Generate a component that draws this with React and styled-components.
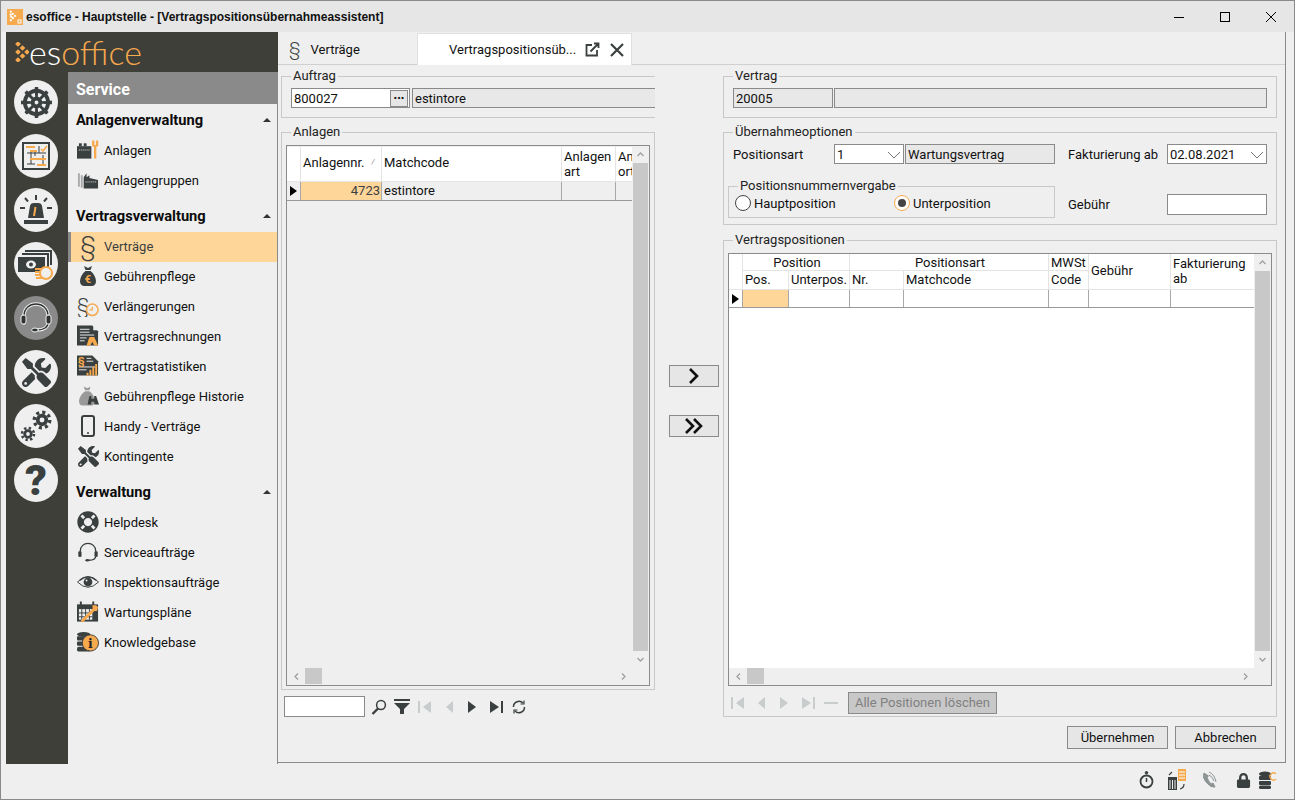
import React from 'react'
import styled, { createGlobalStyle } from 'styled-components'
import { FaDharmachakra, FaTools, FaLifeRing, FaLock } from 'react-icons/fa'

const DARK = '#3a3f3f'
const ORANGE = '#f7a94e'

const Global = createGlobalStyle`
  html, body { margin:0; padding:0; background:#efefef; overflow:hidden; }
  * { box-sizing:border-box; }
  body { font-family:Roboto, "Liberation Sans", sans-serif; font-size:13px; color:#111; }
`

const Window = styled.div`
  width:1295px;
  height:800px;
  border:1px solid #8a8a8a;
  background:#efefef;
  display:flex;
  flex-direction:column;
`
const TitleBar = styled.div`
  height:31px;
  background:#e6e6e6;
  display:flex;
  align-items:center;
  padding-left:6px;
  flex:none;
`
const TitleText = styled.div`
  font-family:"Liberation Sans", sans-serif;
  font-weight:700;
  font-size:12px;
  margin-left:3px;
  flex:1;
`
const WinButton = styled.div`
  width:46px;
  height:31px;
  display:flex;
  align-items:center;
  justify-content:center;
`
const Shell = styled.div`
  height:732px;
  flex:none;
  display:flex;
  padding:0 8px 0 5px;
`
const Side = styled.div`
  width:272px;
  height:732px;
  flex:none;
  background:#3f3f39;
  display:flex;
  flex-direction:column;
`
const LogoBar = styled.div`
  height:40px;
  display:flex;
  align-items:center;
  padding-left:9px;
  flex:none;
`
const LogoText = styled.div`
  font-family:Lato, "Open Sans", sans-serif;
  font-weight:300;
  font-size:34px;
  line-height:40px;
  color:#fff;
  span { color:${ORANGE}; }
`
const SideBody = styled.div`
  flex:1;
  display:flex;
  min-height:0;
`
const Rail = styled.div`
  width:62px;
  flex:none;
  padding:8px 0 0 8px;
  display:flex;
  flex-direction:column;
  gap:10px;
`
const RailButton = styled.div`
  width:44px;
  height:44px;
  border-radius:50%;
  background:${p => (p.$active ? '#8a8a8a' : '#efefef')};
  color:${DARK};
  display:flex;
  align-items:center;
  justify-content:center;
`
const Question = styled.span`
  font-family:Roboto, sans-serif;
  font-weight:900;
  font-size:43px;
  line-height:44px;
`
const Menu = styled.div`
  flex:1;
  background:#efefef;
  border-right:1px solid #8a8a8a;
`
const MenuHead = styled.div`
  height:32px;
  background:#8a8a8a;
  color:#fff;
  font-weight:700;
  font-size:16px;
  line-height:36px;
  padding-left:8px;
`
const Section = styled.div`
  margin-bottom:4px;
`
const SectionHead = styled.div`
  height:32px;
  display:flex;
  align-items:center;
  justify-content:space-between;
  padding:0 6px 0 8px;
  font-weight:700;
  font-size:14.67px;
  color:#0c0c0c;
  &::after {
    content:'';
    border:4px solid transparent;
    border-top:0;
    border-bottom:4px solid #333;
  }
`
const Item = styled.div`
  height:30px;
  display:flex;
  align-items:center;
  gap:5px;
  padding:0 0 2px 6px;
  border-left:3px solid ${p => (p.$active ? '#8a8a8a' : 'transparent')};
  background:${p => (p.$active ? '#ffd699' : 'transparent')};
  color:${p => (p.$active ? '#3a3f3f' : '#111')};
`
const ItemIcon = styled.div`
  width:22px;
  height:22px;
  flex:none;
  color:${DARK};
  display:flex;
  align-items:center;
  justify-content:center;
`
const Paragraph = styled.span`
  font-size:${p => p.$size || 26}px;
  font-weight:300;
  line-height:22px;
  color:${DARK};
`
const Panel = styled.div`
  flex:1;
  height:731px;
  border-right:1px solid #8a8a8a;
  border-bottom:1px solid #8a8a8a;
  display:flex;
  flex-direction:column;
  min-width:0;
`
const TabBar = styled.div`
  height:33px;
  flex:none;
  display:flex;
  border-bottom:1px solid #d0d0d0;
  padding-top:1px;
`
const Tab = styled.div`
  width:${p => p.$w}px;
  height:32px;
  display:flex;
  align-items:center;
  background:${p => (p.$active ? '#fff' : 'transparent')};
  ${p => p.$active && 'border:1px solid #e0e0e0; border-bottom:0;'}
  padding-left:${p => (p.$active ? 31 : 11)}px;
`
const TabIcon = styled.div`
  margin-left:${p => p.$ml}px;
  display:flex;
`
const Content = styled.div`
  flex:1;
  display:flex;
  padding:3px 0 0 3px;
  min-height:0;
`
const Column = styled.div`
  width:${p => p.$w}px;
  flex:none;
  display:flex;
  flex-direction:column;
`
const Box = styled.fieldset`
  margin:${p => p.$mt || 0}px 0 0;
  padding:${p => p.$pad || '4px 9px 0'};
  min-width:0;
  height:${p => p.$h}px;
  border:1px solid #c8c8c8;
  ${p => p.$open && 'border-right:0;'}
  display:flex;
  ${p => p.$col && 'flex-direction:column;'}
  flex:none;
  legend {
    padding:0 2px;
    margin-left:${p => p.$lm || 0}px;
    line-height:16px;
    font-size:13px;
    color:#222;
  }
`
const Row = styled.div`
  display:flex;
  align-items:center;
  width:100%;
  height:${p => p.$h || 20}px;
  margin-top:${p => p.$mt || 0}px;
  flex:none;
`
const Field = styled.div`
  height:${p => p.$h || 20}px;
  width:${p => (p.$w ? p.$w + 'px' : 'auto')};
  ${p => !p.$w && 'flex:1;'}
  margin-left:${p => p.$ml || 0}px;
  border:1px solid #8a8a8a;
  ${p => p.$open && 'border-right:0;'}
  background:${p => (p.$white ? '#fff' : '#e8e8e8')};
  padding:1px 2px 0;
  line-height:17px;
  display:flex;
  align-items:center;
  justify-content:space-between;
  flex-shrink:0;
`
const DotsButton = styled.div`
  width:18px;
  height:17px;
  margin:-1px -1px 0 0;
  border:1px solid #8a8a8a;
  background:#e6e6e6;
  font-weight:900;
  font-size:12px;
  line-height:9px;
  text-align:center;
`
const Label = styled.div`
  width:${p => p.$w}px;
  flex:none;
  padding-left:${p => p.$pl || 0}px;
`
const Frame = styled.div`
  flex:none;
  border:1px solid #8a8a8a;
  display:flex;
  flex-direction:column;
  height:${p => p.$h}px;
`
const FrameBody = styled.div`
  flex:1;
  display:flex;
  min-height:0;
`
const GridMain = styled.div`
  flex:1;
  min-width:0;
  overflow:hidden;
  background:${p => (p.$white ? '#fff' : '#efefef')};
`
const HeadGrid = styled.div`
  display:grid;
  grid-template-columns:${p => p.$cols};
  grid-template-rows:${p => p.$rows};
  gap:1px;
  background:#e4e4e4;
  border-bottom:1px solid #e4e4e4;
  margin-top:${p => p.$mt || 0}px;
`
const HeadCell = styled.div`
  background:#fff;
  overflow:hidden;
  white-space:nowrap;
  padding:0 0 ${p => p.$lift || 0}px 2px;
  line-height:15px;
  display:flex;
  align-items:center;
  ${p => p.$span && `grid-column:span ${p.$span};`}
  ${p => p.$tall && 'grid-row:span 2;'}
  ${p => p.$center && 'justify-content:center;'}
`
const StackedHead = styled.div`
  line-height:15px;
`
const SortMark = styled.span`
  margin:0 6px 0 auto;
  font-size:9px;
  color:#777;
`
const DataGrid = styled.div`
  display:grid;
  grid-template-columns:${p => p.$cols};
  grid-auto-rows:${p => p.$rowH}px;
  gap:1px;
  background:#a8a8a8;
  border-bottom:1px solid #9a9a9a;
`
const DataCell = styled.div`
  background:${p => (p.$sel ? '#ffd699' : p.$white ? '#fff' : '#efefef')};
  text-align:${p => (p.$right ? 'right' : 'left')};
  padding:0 1px 0 2px;
  line-height:18px;
  color:${p => (p.$sel ? '#3a3f3f' : '#111')};
`
const RowMark = styled.div`
  background:${p => (p.$white ? '#fff' : '#efefef')};
  display:flex;
  align-items:center;
  padding-left:3px;
  &::before {
    content:'';
    border:5px solid transparent;
    border-left:7px solid #000;
    border-right:0;
  }
`
const VBar = styled.div`
  width:17px;
  flex:none;
  display:flex;
  flex-direction:column;
  background:#efefef;
`
const BarEnd = styled.div`
  height:17px;
  flex:none;
  display:flex;
  align-items:center;
  justify-content:center;
`
const VThumb = styled.div`
  flex:1;
  background:#c8c8c8;
  margin:0 1px;
`
const HBar = styled.div`
  height:17px;
  flex:none;
  display:flex;
  align-items:center;
  background:#efefef;
  padding:0 ${p => p.$pr}px 1px 0;
`
const HArrow = styled.div`
  width:18px;
  display:flex;
  justify-content:center;
`
const HThumb = styled.div`
  width:17px;
  height:16px;
  background:#c8c8c8;
`
const Spacer = styled.div`
  flex:1;
`
const Toolbar = styled.div`
  display:flex;
  align-items:center;
  flex:none;
  margin:${p => p.$m};
`
const Slot = styled.div`
  width:23.4px;
  display:flex;
  justify-content:center;
  align-items:center;
`
const SearchBox = styled(Field)`
  margin-right:2px;
`
const Disabled = styled.div`
  width:149px;
  height:22px;
  margin-left:5px;
  border:1px solid #8a8a8a;
  background:#c8c8c8;
  color:#808080;
  text-align:center;
  line-height:20px;
`
const Middle = styled.div`
  width:68px;
  flex:none;
  padding:297px 0 0 14px;
  display:flex;
  flex-direction:column;
  gap:28px;
`
const MoveButton = styled.div`
  width:50px;
  height:22px;
  border:1px solid #8a8a8a;
  background:#e6e6e6;
  display:flex;
  align-items:center;
  justify-content:center;
`
const OptionsGrid = styled.div`
  flex:1;
  display:grid;
  grid-template-columns:327px 1fr;
  column-gap:13px;
`
const OptionsSide = styled.div`
  display:flex;
  flex-direction:column;
`
const Radios = styled.div`
  flex:1;
  display:flex;
  align-items:center;
  height:18px;
`
const Radio = styled.div`
  width:${p => p.$w}px;
  display:flex;
  align-items:center;
  gap:3px;
`
const RadioDot = styled.div`
  width:16px;
  height:16px;
  border-radius:50%;
  background:#fff;
  border:1px solid ${p => (p.$on ? ORANGE : '#444')};
  display:flex;
  align-items:center;
  justify-content:center;
  &::after {
    content:'';
    width:8px;
    height:8px;
    border-radius:50%;
    background:${p => (p.$on ? '#444' : 'transparent')};
  }
`
const Actions = styled.div`
  display:flex;
  justify-content:flex-end;
  gap:7px;
  margin:9px 1px 0 0;
`
const ActionButton = styled.div`
  width:101px;
  height:23px;
  border:1px solid #8a8a8a;
  background:#e6e6e6;
  text-align:center;
  line-height:21px;
  color:#111;
`
const StatusBar = styled.div`
  flex:1;
  display:flex;
  align-items:center;
  justify-content:flex-end;
  padding:0 17px 3px 0;
`
const StatusIcon = styled.div`
  display:flex;
  margin-left:${p => p.$ml || 0}px;
`

const Tiny = ({ d }) => (
  <svg width="9" height="9" viewBox="0 0 9 9"><path d={d} fill="none" stroke="#a0a0a0" strokeWidth="1.3" /></svg>
)
const UP = 'M1.5 6 L4.5 3 L7.5 6'
const DOWN = 'M1.5 3 L4.5 6 L7.5 3'
const LEFT = 'M6 1.5 L3 4.5 L6 7.5'
const RIGHT = 'M3 1.5 L6 4.5 L3 7.5'

const Chevron = () => (
  <svg width="14" height="8" viewBox="0 0 14 8"><path d="M1 1 L7 7 L13 1" fill="none" stroke="#777" /></svg>
)

const TitleLogo = () => (
  <svg width="16" height="16" viewBox="0 0 16 16">
    <rect width="16" height="16" fill={ORANGE} />
    <path d="M3 2 L8 7 L3 12 M3 5 L5 7 L3 9" fill="none" stroke="#fff" strokeWidth="2" strokeDasharray="2 1" />
    <rect x="11" y="11" width="3" height="3" fill="none" stroke="#fff" />
  </svg>
)
const LogoMark = () => (
  <svg width="14" height="20" viewBox="0 0 14 20" fill={ORANGE}>
    {[[1, 2], [1, 10], [1, 18], [5.5, 6], [5.5, 14], [10, 10]].map(([x, y], i) => (
      <rect key={i} x={x} y={y - 2} width="4" height="4" transform={`rotate(45 ${x + 2} ${y})`} />
    ))}
  </svg>
)
const BoardIcon = () => (
  <svg width="28" height="28" viewBox="0 0 28 28">
    <rect x="1" y="1" width="26" height="26" fill="none" stroke={DARK} strokeWidth="2" />
    <path d="M9 8 V22 M13 8 V14 M17 4 V11 M21 13 V22 M5 11 H24 M5 22 H13" stroke={DARK} fill="none" />
    <path d="M4 5 H13 M8 9 H15 M8 17 H24 M15 23 H24" stroke={ORANGE} strokeWidth="2" fill="none" />
    <path d="M19 7 L21 9 L25 4" stroke={ORANGE} strokeWidth="1.6" fill="none" />
  </svg>
)
const SirenIcon = () => (
  <svg width="34" height="34" viewBox="0 0 34 34">
    <rect x="5" y="27" width="24" height="4" fill={DARK} />
    <path d="M9 25 L11 13 Q11.5 10 15 10 H19 Q22.5 10 23 13 L25 25 Z" fill={DARK} />
    <path d="M15 23 L16.5 14" stroke={ORANGE} strokeWidth="2" />
    <path d="M17 2 V7 M6 5 L9 8.5 M28 5 L25 8.5 M1 15 H6 M28 15 H33" stroke={DARK} strokeWidth="2" />
  </svg>
)
const MoneyIcon = () => (
  <svg width="36" height="34" viewBox="0 0 36 34">
    <path d="M7 4 H33 V18 M4 7 H30 V20" fill="none" stroke={DARK} strokeWidth="2" />
    <rect x="0" y="10" width="27" height="15" fill={DARK} />
    <ellipse cx="13" cy="17.5" rx="5" ry="4" fill="#efefef" />
    <circle cx="13" cy="17.5" r="2" fill={DARK} />
    <path d="M17 22 H26 M17 25 H26 M17 28 H26 M18 31 H27" stroke={ORANGE} strokeWidth="2" />
    <circle cx="28" cy="26" r="6" fill="#efefef" stroke={ORANGE} strokeWidth="2" />
  </svg>
)
const HeadsetIcon = ({ size = 34, color = DARK }) => (
  <svg width={size} height={size} viewBox="0 0 34 34">
    <path d="M5 22 V15 C5 -1 29 -1 29 15 V22 C29 26 25 29 18 29" fill="none" stroke={color} strokeWidth="2" />
    <rect x="2" y="15" width="5" height="9" rx="2" fill={color} />
    <rect x="27" y="15" width="5" height="9" rx="2" fill={color} />
    <ellipse cx="16" cy="29" rx="3" ry="2" fill={color} />
  </svg>
)
const RailHeadset = () => (
  <svg width="36" height="36" viewBox="0 0 36 36" fill="none" strokeLinecap="round">
    <path d="M6 23 V16 C6 0 30 0 30 16 V23 C30 27 26 30 19 30" stroke="#efefef" strokeWidth="3.4" />
    <path d="M6 23 V16 C6 0 30 0 30 16 V23 C30 27 26 30 19 30" stroke="#2f3333" strokeWidth="1.4" />
    <rect x="3" y="15" width="5" height="9" rx="2" fill="#2f3333" stroke="#efefef" />
    <rect x="28" y="15" width="5" height="9" rx="2" fill="#2f3333" stroke="#efefef" />
    <ellipse cx="17" cy="30" rx="3.4" ry="2" fill="#2f3333" stroke="#efefef" />
  </svg>
)
const Gear = ({ x, y, r }) => {
  const teeth = 2 * Math.PI * (r * 1.3) / 16
  return (
    <g fill="none" stroke={DARK}>
      <circle cx={x} cy={y} r={r * 0.72} strokeWidth={r * 0.62} />
      <circle cx={x} cy={y} r={r * 1.3} strokeWidth={r * 0.55} strokeDasharray={`${teeth} ${teeth}`} />
    </g>
  )
}
const GearsIcon = () => (
  <svg width="34" height="34" viewBox="0 0 34 34">
    <Gear x={23} y={11} r={6} />
    <Gear x={9} y={25} r={4.6} />
  </svg>
)
const MachineIcon = () => (
  <svg width="23" height="22" viewBox="0 0 23 22">
    <rect x="0" y="7" width="15" height="13" fill={DARK} />
    <rect x="2" y="4" width="3" height="3" fill={DARK} />
    <rect x="7" y="4" width="3" height="3" fill={DARK} />
    <path d="M2 11 H13" stroke="#efefef" strokeDasharray="1 1" />
    <path d="M17 1 V6 Q19 8 21 6 V1 M19 8 V20" fill="none" stroke={ORANGE} strokeWidth="2.4" />
  </svg>
)
const FactoryGroupIcon = () => (
  <svg width="23" height="22" viewBox="0 0 23 22">
    <path d="M1 4 H3 V18 H1 Z M4 6 H6 V19 H4 Z" fill="#aaa" />
    <path d="M7 8 L10 4 V8 L13 6 V9 L22 11 V20 H7 Z" fill={DARK} />
    <path d="M9 13 H20" stroke="#efefef" strokeDasharray="1 1" />
  </svg>
)
const BagIcon = ({ color = DARK, euro = ORANGE }) => (
  <svg width="20" height="22" viewBox="0 0 20 22">
    <path d="M6 1 L10 3 L14 1 L12.5 5 H7.5 Z" fill={color} />
    <path d="M7.5 6 H12.5 C19 11 20 21 14 21 H6 C0 21 1 11 7.5 6 Z" fill={color} />
    <text x="10" y="18" textAnchor="middle" fontSize="11" fontWeight="700" fill={euro} fontFamily="Roboto">€</text>
  </svg>
)
const RenewIcon = () => (
  <svg width="23" height="22" viewBox="0 0 23 22">
    <text x="0" y="18" fontSize="21" fontWeight="300" fill={DARK} fontFamily="Roboto">§</text>
    <circle cx="16" cy="15" r="6" fill="#efefef" stroke={ORANGE} strokeWidth="1.6" />
    <path d="M16 12 V15 H13" fill="none" stroke={ORANGE} strokeWidth="1.3" />
  </svg>
)
const InvoiceIcon = () => (
  <svg width="23" height="22" viewBox="0 0 23 22">
    <path d="M0 0 H16 L22 6 V21 H0 Z" fill={DARK} />
    <path d="M3 4 H13 M3 7 H13 M3 10 H18 M3 13 H10 M3 16 H8" stroke="#efefef" />
    <path d="M17 0 L22 5 H17 Z" fill="#efefef" />
    <path d="M10 21 L13 12 H18 L22 21 H18 L16 17 L14 21 Z" fill={ORANGE} />
  </svg>
)
const StatsIcon = () => (
  <svg width="23" height="22" viewBox="0 0 23 22">
    <path d="M0 0 H16 L22 6 V21 H0 Z" fill={DARK} />
    <path d="M10 3 H15 M10 6 H17 M2 12 H19 M2 15 H10" stroke="#efefef" />
    <text x="1" y="10" fontSize="11" fontWeight="700" fill={ORANGE} fontFamily="Roboto">§</text>
    <path d="M11 21 V18 M14 21 V15 M17 21 V12 M20 21 V9" stroke={ORANGE} strokeWidth="2" />
  </svg>
)
const BagHistoryIcon = () => (
  <svg width="23" height="22" viewBox="0 0 23 22">
    <path d="M7 1 L11 3 L14 1 L13 5 H8.5 Z" fill="#999" />
    <path d="M8.5 6 H13 C20 11 20 21 15 21 H6 C0 21 1 11 8.5 6 Z" fill="#999" />
    <path d="M11 20 L13 11 H15 V14 H18 V11 H20 L23 20 H18 V17 H15 V20 Z" fill={DARK} />
  </svg>
)
const PhoneIcon = () => (
  <svg width="14" height="22" viewBox="0 0 14 22">
    <rect x="1" y="1" width="12" height="20" rx="2" fill="none" stroke={DARK} strokeWidth="2" />
    <circle cx="7" cy="18" r="1" fill={DARK} />
  </svg>
)
const EyeIcon = () => (
  <svg width="23" height="16" viewBox="0 0 23 16">
    <path d="M0.5 8 Q11.5 -3 22.5 8 Q11.5 19 0.5 8 Z" fill="none" stroke={DARK} />
    <path d="M3 6 Q11.5 -1 20 6" fill="none" stroke={DARK} strokeWidth="1.6" />
    <circle cx="11.5" cy="8" r="4.6" fill={DARK} />
    <circle cx="10" cy="6.5" r="1" fill="#efefef" />
  </svg>
)
const CalendarIcon = () => (
  <svg width="23" height="22" viewBox="0 0 23 22">
    <path d="M0 3 H22 V21 H0 Z" fill={DARK} />
    <path d="M4 0 V4 M17 0 V4" stroke={DARK} strokeWidth="2" />
    <rect x="2" y="8" width="14" height="11" fill="#efefef" />
    <path d="M5 8 V19 M9 8 V19 M13 8 V19 M2 12 H16 M2 16 H16" stroke={DARK} />
    <path d="M5 21 L18 8" stroke={ORANGE} strokeWidth="3" />
    <path d="M16 4 L20 4 L22 6 L21 10 L17 10 Z" fill={ORANGE} />
  </svg>
)
const KnowledgeIcon = () => (
  <svg width="23" height="22" viewBox="0 0 23 22">
    <ellipse cx="7" cy="3" rx="7" ry="2.5" fill={DARK} />
    <rect x="0" y="5" width="14" height="4.5" rx="1" fill={DARK} />
    <rect x="0" y="10.5" width="14" height="4.5" rx="1" fill={DARK} />
    <rect x="0" y="16" width="14" height="5" rx="2" fill={DARK} />
    <circle cx="14" cy="12" r="8.5" fill={ORANGE} stroke={DARK} />
    <text x="14" y="17" textAnchor="middle" fontSize="13" fontWeight="900" fill="#222" fontFamily="DejaVu Serif">i</text>
  </svg>
)
const NavIcon = ({ kind, color }) => {
  const shapes = {
    first: <><rect x="0" y="2" width="2" height="12" /><path d="M13 2 V14 L5 8 Z" /></>,
    prev: <path d="M11 2 V14 L4 8 Z" />,
    next: <path d="M3 2 V14 L11 8 Z" />,
    last: <><rect x="12" y="2" width="2" height="12" /><path d="M1 2 V14 L10 8 Z" /></>,
    minus: <rect x="0" y="7" width="14" height="2" />,
  }
  return <svg width="14" height="16" viewBox="0 0 14 16" fill={color}>{shapes[kind]}</svg>
}
const SearchIcon = () => (
  <svg width="16" height="16" viewBox="0 0 16 16">
    <circle cx="10" cy="6" r="4.4" fill="none" stroke={DARK} strokeWidth="1.5" />
    <path d="M7 9.5 L1.5 15" stroke={DARK} strokeWidth="2.4" />
  </svg>
)
const FunnelIcon = () => (
  <svg width="16" height="16" viewBox="0 0 16 16" fill={DARK}>
    <rect x="0" y="0" width="16" height="2" />
    <path d="M0 4 H16 L10 10 V15 H6 V10 Z" />
  </svg>
)
const RefreshIcon = () => (
  <svg width="14" height="14" viewBox="0 0 14 14" fill="none" stroke={DARK} strokeWidth="1.5">
    <path d="M1.5 7 A5.5 5.5 0 0 1 11 3" />
    <path d="M12.5 7 A5.5 5.5 0 0 1 3 11" />
    <path d="M12 0.5 V4 H8.5 M2 13.5 V10 H5.5" strokeWidth="1.2" />
  </svg>
)
const StopwatchIcon = () => (
  <svg width="15" height="18" viewBox="0 0 15 18" fill="none" stroke={DARK}>
    <circle cx="7.5" cy="10.5" r="6" strokeWidth="1.8" />
    <path d="M7.5 7 V11" strokeWidth="1.5" />
    <circle cx="7.5" cy="1.8" r="1.3" fill={DARK} />
  </svg>
)
const BuildingIcon = () => (
  <svg width="20" height="22" viewBox="0 0 20 22">
    <rect x="11" y="0" width="8" height="12" fill={ORANGE} />
    <path d="M12 3 H18 M12 6 H18 M12 9 H18" stroke="#fff" />
    <rect x="1" y="8" width="9" height="13" fill={DARK} />
    <path d="M3 11 V20 M5.5 11 V20 M8 11 V20" stroke="#efefef" />
    <path d="M2 6 L5 3 M17 15 Q17 19 13 20" fill="none" stroke={DARK} strokeWidth="1.2" />
  </svg>
)
const CallIcon = () => (
  <svg width="16" height="18" viewBox="0 0 16 18" fill="none" stroke="#8d9494">
    <path d="M2 2 Q0 7 5 12 Q9 17 13 16 L11 12 L9 13 Q6 10 5 6 L6.5 5 Z" fill="#8d9494" />
    <path d="M7 1 Q13 4 14 11 M7 4 Q11 6 12 10" />
  </svg>
)
const DbIcon = () => (
  <svg width="18" height="18" viewBox="0 0 18 18">
    <ellipse cx="6" cy="3" rx="6" ry="2.4" fill={DARK} />
    <rect x="0" y="5" width="12" height="4" rx="1" fill={DARK} />
    <rect x="0" y="10" width="12" height="4" rx="1" fill={DARK} />
    <rect x="0" y="14.5" width="12" height="3.5" rx="1.5" fill={DARK} />
    <path d="M17 3 A3.5 3.5 0 1 0 17 8" fill="none" stroke={ORANGE} strokeWidth="1.3" />
  </svg>
)

const Scroll = ({ pr, vertical }) =>
  vertical ? (
    <VBar>
      <BarEnd><Tiny d={UP} /></BarEnd>
      <VThumb />
      <BarEnd><Tiny d={DOWN} /></BarEnd>
    </VBar>
  ) : (
    <HBar $pr={pr}>
      <HArrow><Tiny d={LEFT} /></HArrow>
      <HThumb />
      <Spacer />
      <HArrow><Tiny d={RIGHT} /></HArrow>
    </HBar>
  )

const menu = [
  { title: 'Anlagenverwaltung', items: [
    ['Anlagen', <MachineIcon />],
    ['Anlagengruppen', <FactoryGroupIcon />],
  ] },
  { title: 'Vertragsverwaltung', items: [
    ['Verträge', <Paragraph>§</Paragraph>, true],
    ['Gebührenpflege', <BagIcon />],
    ['Verlängerungen', <RenewIcon />],
    ['Vertragsrechnungen', <InvoiceIcon />],
    ['Vertragstatistiken', <StatsIcon />],
    ['Gebührenpflege Historie', <BagHistoryIcon />],
    ['Handy - Verträge', <PhoneIcon />],
    ['Kontingente', <FaTools size={21} />],
  ] },
  { title: 'Verwaltung', items: [
    ['Helpdesk', <FaLifeRing size={22} />],
    ['Serviceaufträge', <HeadsetIcon size={23} />],
    ['Inspektionsaufträge', <EyeIcon />],
    ['Wartungspläne', <CalendarIcon />],
    ['Knowledgebase', <KnowledgeIcon />],
  ] },
]

const LEFT_COLS = '13px 80px 179px 53px 1fr'
const RIGHT_COLS = '13px 45px 60px 53px 144px 39px 81px 1fr'

const App = () => {
  return (
    <Window>
      <Global />
      <TitleBar>
        <TitleLogo />
        <TitleText>esoffice - Hauptstelle - [Vertragspositionsübernahmeassistent]</TitleText>
        <WinButton>
          <svg width="10" height="10"><path d="M0 5.5 H10" stroke="#000" /></svg>
        </WinButton>
        <WinButton>
          <svg width="10" height="10"><rect x="0.5" y="0.5" width="9" height="9" fill="none" stroke="#000" /></svg>
        </WinButton>
        <WinButton>
          <svg width="10" height="10"><path d="M0 0 L10 10 M10 0 L0 10" stroke="#000" /></svg>
        </WinButton>
      </TitleBar>
      <Shell>
        <Side>
          <LogoBar>
            <LogoMark />
            <LogoText>es<span>office</span></LogoText>
          </LogoBar>
          <SideBody>
            <Rail>
              <RailButton><FaDharmachakra size={31} /></RailButton>
              <RailButton><BoardIcon /></RailButton>
              <RailButton><SirenIcon /></RailButton>
              <RailButton><MoneyIcon /></RailButton>
              <RailButton $active><RailHeadset /></RailButton>
              <RailButton><FaTools size={29} /></RailButton>
              <RailButton><GearsIcon /></RailButton>
              <RailButton><Question>?</Question></RailButton>
            </Rail>
            <Menu>
              <MenuHead>Service</MenuHead>
              {menu.map(s => (
                <Section key={s.title}>
                  <SectionHead>{s.title}</SectionHead>
                  {s.items.map(([label, icon, active]) => (
                    <Item key={label} $active={active}>
                      <ItemIcon>{icon}</ItemIcon>
                      {label}
                    </Item>
                  ))}
                </Section>
              ))}
            </Menu>
          </SideBody>
        </Side>
        <Panel>
          <TabBar>
            <Tab $w={139}>
              <Paragraph $size={19}>§</Paragraph>
              <TabIcon $ml={10}>Verträge</TabIcon>
            </Tab>
            <Tab $w={215} $active>
              Vertragspositionsüb...
              <TabIcon $ml={9}>
                <svg width="15" height="15" viewBox="0 0 15 15" fill="none" stroke={DARK} strokeWidth="1.8">
                  <path d="M7 3 H1.5 V13.5 H12 V8" />
                  <path d="M5.5 9.5 L13 2 M9 1.5 H13.5 V6" />
                </svg>
              </TabIcon>
              <TabIcon $ml={10}>
                <svg width="14" height="14" viewBox="0 0 14 14"><path d="M1 1 L13 13 M13 1 L1 13" stroke={DARK} strokeWidth="2.2" /></svg>
              </TabIcon>
            </Tab>
          </TabBar>
          <Content>
            <Column $w={374}>
              <Box $h={50} $open $pad="4px 0 0 9px">
                <legend>Auftrag</legend>
                <Row>
                  <Field $w={119} $white>800027<DotsButton>...</DotsButton></Field>
                  <Field $ml={2} $open>estintore</Field>
                </Row>
              </Box>
              <Box $h={566} $mt={6} $pad="5px 4px 4px" $lm={5} $col>
                <legend>Anlagen</legend>
                <Frame $h={541}>
                  <FrameBody>
                    <GridMain>
                      <HeadGrid $cols={LEFT_COLS} $rows="34px" $mt={1}>
                        <HeadCell />
                        <HeadCell $lift={3}>Anlagennr.<SortMark>⁄</SortMark></HeadCell>
                        <HeadCell $lift={3}>Matchcode</HeadCell>
                        <HeadCell><StackedHead>Anlagen<br />art</StackedHead></HeadCell>
                        <HeadCell><StackedHead>Anlagen<br />ort</StackedHead></HeadCell>
                      </HeadGrid>
                      <DataGrid $cols={LEFT_COLS} $rowH={18}>
                        <RowMark />
                        <DataCell $sel $right>4723</DataCell>
                        <DataCell>estintore</DataCell>
                        <DataCell />
                        <DataCell />
                      </DataGrid>
                    </GridMain>
                    <Scroll vertical />
                  </FrameBody>
                  <Scroll pr={17} />
                </Frame>
              </Box>
              <Toolbar $m="6px 0 0 3px">
                <SearchBox $w={81} $h={21} $white />
                <Slot><SearchIcon /></Slot>
                <Slot><FunnelIcon /></Slot>
                <Slot><NavIcon kind="first" color="#c8cccc" /></Slot>
                <Slot><NavIcon kind="prev" color="#c8cccc" /></Slot>
                <Slot><NavIcon kind="next" color={DARK} /></Slot>
                <Slot><NavIcon kind="last" color={DARK} /></Slot>
                <Slot><RefreshIcon /></Slot>
              </Toolbar>
            </Column>
            <Middle>
              <MoveButton>
                <svg width="14" height="16" viewBox="0 0 14 16"><path d="M3 1 L10 8 L3 15" fill="none" stroke="#111" strokeWidth="2.6" /></svg>
              </MoveButton>
              <MoveButton>
                <svg width="20" height="16" viewBox="0 0 20 16" fill="none" stroke="#111" strokeWidth="2.6"><path d="M2 1 L9 8 L2 15 M10 1 L17 8 L10 15" /></svg>
              </MoveButton>
            </Middle>
            <Column $w={554}>
              <Box $h={50}>
                <legend>Vertrag</legend>
                <Row>
                  <Field $w={100}>20005</Field>
                  <Field $ml={1} />
                </Row>
              </Box>
              <Box $h={101} $mt={6} $pad="4px 9px 0 4px" $lm={5}>
                <legend>Übernahmeoptionen</legend>
                <OptionsGrid>
                  <OptionsSide>
                    <Row>
                      <Label $w={106} $pl={5}>Positionsart</Label>
                      <Field $w={70} $white>1<Chevron /></Field>
                      <Field $ml={1} $w={150}>Wartungsvertrag</Field>
                    </Row>
                    <Box $h={40} $mt={14} $pad="0 6px" $lm={3}>
                      <legend>Positionsnummernvergabe</legend>
                      <Radios>
                        <Radio $w={159}><RadioDot />Hauptposition</Radio>
                        <Radio><RadioDot $on />Unterposition</Radio>
                      </Radios>
                    </Box>
                  </OptionsSide>
                  <OptionsSide>
                    <Row>
                      <Label $w={99}>Fakturierung ab</Label>
                      <Field $w={100} $white>02.08.2021<Chevron /></Field>
                    </Row>
                    <Row $h={21} $mt={30}>
                      <Label $w={99}>Gebühr</Label>
                      <Field $w={100} $h={21} $white />
                    </Row>
                  </OptionsSide>
                </OptionsGrid>
              </Box>
              <Box $h={485} $mt={7} $pad="5px 4px 0" $lm={5} $col>
                <legend>Vertragspositionen</legend>
                <Frame $h={433}>
                  <FrameBody>
                    <GridMain $white>
                      <HeadGrid $cols={RIGHT_COLS} $rows="16px 18px">
                        <HeadCell $tall />
                        <HeadCell $span={2} $center>Position</HeadCell>
                        <HeadCell $span={2} $center>Positionsart</HeadCell>
                        <HeadCell>MWSt</HeadCell>
                        <HeadCell $tall $lift={2}>Gebühr</HeadCell>
                        <HeadCell $tall $lift={2}><StackedHead>Fakturierung<br />ab</StackedHead></HeadCell>
                        <HeadCell $lift={2}>Pos.</HeadCell>
                        <HeadCell $lift={2}>Unterpos.</HeadCell>
                        <HeadCell $lift={2}>Nr.</HeadCell>
                        <HeadCell $lift={2}>Matchcode</HeadCell>
                        <HeadCell $lift={2}>Code</HeadCell>
                      </HeadGrid>
                      <DataGrid $cols={RIGHT_COLS} $rowH={17}>
                        <RowMark $white />
                        <DataCell $sel />
                        <DataCell $white />
                        <DataCell $white />
                        <DataCell $white />
                        <DataCell $white />
                        <DataCell $white />
                        <DataCell $white />
                      </DataGrid>
                    </GridMain>
                    <Scroll vertical />
                  </FrameBody>
                  <Scroll pr={17} />
                </Frame>
                <Toolbar $m="6px 0 0 -2px">
                  <Slot><NavIcon kind="first" color="#c8cccc" /></Slot>
                  <Slot><NavIcon kind="prev" color="#c8cccc" /></Slot>
                  <Slot><NavIcon kind="next" color="#c8cccc" /></Slot>
                  <Slot><NavIcon kind="last" color="#c8cccc" /></Slot>
                  <Slot><NavIcon kind="minus" color="#c8cccc" /></Slot>
                  <Disabled>Alle Positionen löschen</Disabled>
                </Toolbar>
              </Box>
              <Actions>
                <ActionButton>Übernehmen</ActionButton>
                <ActionButton>Abbrechen</ActionButton>
              </Actions>
            </Column>
          </Content>
        </Panel>
      </Shell>
      <StatusBar>
        <StatusIcon><StopwatchIcon /></StatusIcon>
        <StatusIcon $ml={13}><BuildingIcon /></StatusIcon>
        <StatusIcon $ml={15}><CallIcon /></StatusIcon>
        <StatusIcon $ml={18}><FaLock size={15} color={DARK} /></StatusIcon>
        <StatusIcon $ml={8}><DbIcon /></StatusIcon>
      </StatusBar>
    </Window>
  )
}

export default App
